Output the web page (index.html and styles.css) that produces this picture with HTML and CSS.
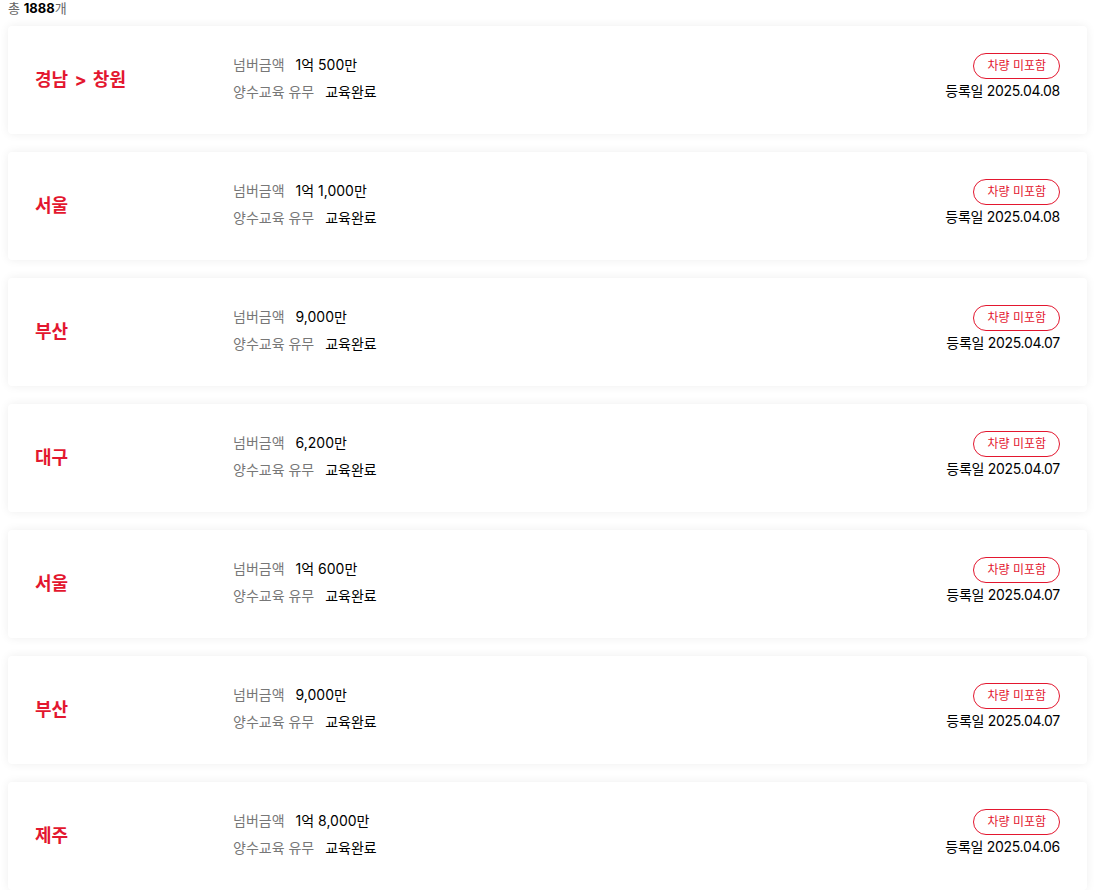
FILE: index.html
```html
<!DOCTYPE html>
<html lang="ko">
<head>
  <meta charset="UTF-8" />
  <meta name="viewport" content="width=device-width, initial-scale=1.0"/>
  <title>매물 목록</title>
  <link rel="stylesheet" href="styles.css">
</head>
<body>
  <div class="total">총 <b>1888</b>개</div>

  <div class="list">
    <div class="item">
      <div class="region">경남 &gt; 창원</div>
      <div class="info">
        <div class="row"><span class="label">넘버금액</span><span class="value">1억 500만</span></div>
        <div class="row"><span class="label">양수교육 유무</span><span class="value">교육완료</span></div>
      </div>
      <div class="side">
        <span class="badge">차량 미포함</span>
        <span class="date">등록일 2025.04.08</span>
      </div>
    </div>

    <div class="item">
      <div class="region">서울</div>
      <div class="info">
        <div class="row"><span class="label">넘버금액</span><span class="value">1억 1,000만</span></div>
        <div class="row"><span class="label">양수교육 유무</span><span class="value">교육완료</span></div>
      </div>
      <div class="side">
        <span class="badge">차량 미포함</span>
        <span class="date">등록일 2025.04.08</span>
      </div>
    </div>

    <div class="item">
      <div class="region">부산</div>
      <div class="info">
        <div class="row"><span class="label">넘버금액</span><span class="value">9,000만</span></div>
        <div class="row"><span class="label">양수교육 유무</span><span class="value">교육완료</span></div>
      </div>
      <div class="side">
        <span class="badge">차량 미포함</span>
        <span class="date">등록일 2025.04.07</span>
      </div>
    </div>

    <div class="item">
      <div class="region">대구</div>
      <div class="info">
        <div class="row"><span class="label">넘버금액</span><span class="value">6,200만</span></div>
        <div class="row"><span class="label">양수교육 유무</span><span class="value">교육완료</span></div>
      </div>
      <div class="side">
        <span class="badge">차량 미포함</span>
        <span class="date">등록일 2025.04.07</span>
      </div>
    </div>

    <div class="item">
      <div class="region">서울</div>
      <div class="info">
        <div class="row"><span class="label">넘버금액</span><span class="value">1억 600만</span></div>
        <div class="row"><span class="label">양수교육 유무</span><span class="value">교육완료</span></div>
      </div>
      <div class="side">
        <span class="badge">차량 미포함</span>
        <span class="date">등록일 2025.04.07</span>
      </div>
    </div>

    <div class="item">
      <div class="region">부산</div>
      <div class="info">
        <div class="row"><span class="label">넘버금액</span><span class="value">9,000만</span></div>
        <div class="row"><span class="label">양수교육 유무</span><span class="value">교육완료</span></div>
      </div>
      <div class="side">
        <span class="badge">차량 미포함</span>
        <span class="date">등록일 2025.04.07</span>
      </div>
    </div>

    <div class="item">
      <div class="region">제주</div>
      <div class="info">
        <div class="row"><span class="label">넘버금액</span><span class="value">1억 8,000만</span></div>
        <div class="row"><span class="label">양수교육 유무</span><span class="value">교육완료</span></div>
      </div>
      <div class="side">
        <span class="badge">차량 미포함</span>
        <span class="date">등록일 2025.04.06</span>
      </div>
    </div>
  </div>
</body>
</html>
```

FILE: styles.css
```css
html, body {
  margin: 0;
  padding: 0;
  background: #fff;
  font-family: Inter, 'Noto Sans CJK KR', sans-serif;
  color: #000;
}

body {
  padding: 0 8px;
}

.total {
  font-size: 13px;
  line-height: 17px;
  color: #666;
  margin-bottom: 9px;
}

.total b {
  color: #000;
  font-weight: bold;
}

.list {
  display: flex;
  flex-direction: column;
  gap: 18px;
}

.item {
  display: flex;
  align-items: center;
  height: 104px;
  padding: 0 27px 4px;
  background: #fff;
  border-radius: 4px;
  box-shadow: 0 0 10px rgba(0, 0, 0, 0.07);
}

.region {
  width: 198px;
  font-size: 18px;
  font-weight: bold;
  color: #e3172f;
  word-spacing: 2px;
}

.info {
  flex: 1;
  display: flex;
  flex-direction: column;
  gap: 7px;
  font-size: 14px;
  line-height: 20px;
}

.label {
  color: #777;
  margin-right: 11px;
}

.value {
  color: #000;
}

.side {
  display: flex;
  flex-direction: column;
  align-items: flex-end;
  gap: 2px;
  margin-top: -2px;
}

.badge {
  display: inline-block;
  height: 24px;
  line-height: 24px;
  padding: 0 13px;
  border: 1px solid #e3172f;
  border-radius: 13px;
  color: #e3172f;
  font-size: 12px;
}

.date {
  font-size: 14px;
  line-height: 20px;
  letter-spacing: -0.3px;
}
```
